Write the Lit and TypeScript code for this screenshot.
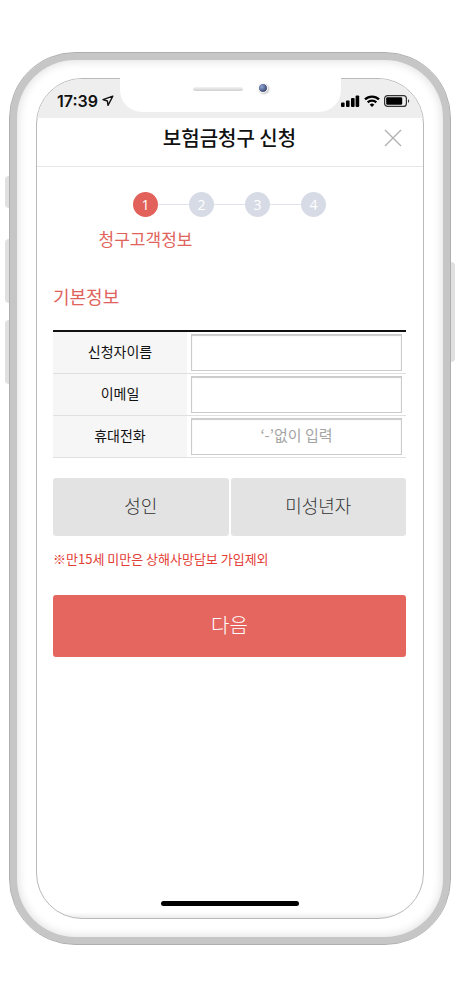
import { LitElement, html, css } from "lit";
import { customElement, property } from "lit/decorators.js";

@customElement("status-bar")
class StatusBar extends LitElement {
  static styles = css`
    :host {
      display: flex;
      justify-content: space-between;
      align-items: center;
      height: 39px;
      padding: 4px 13px 0 20px;
      box-sizing: border-box;
      background: #eeeeee;
      color: #111;
      font: 600 16px/20px Inter, "Liberation Sans", sans-serif;
    }
    .group {
      display: flex;
      align-items: center;
      gap: 4px;
    }
    svg {
      display: block;
    }
  `;
  render() {
    return html`
      <div class="group">
        <span>17:39</span>
        <svg width="12" height="12" viewBox="0 0 12 12" fill="none" stroke="#111" stroke-width="1.4" stroke-linejoin="round">
          <path d="M10.8 1.2 1 4.6 5.4 6 6 10.4Z" />
        </svg>
      </div>
      <div class="group">
        <svg width="19" height="12" viewBox="0 0 19 12">
          <rect x="0" y="7.5" width="3.6" height="4.5" rx="1" />
          <rect x="5" y="5.5" width="3.6" height="6.5" rx="1" />
          <rect x="10" y="3" width="3.6" height="9" rx="1" />
          <rect x="14.6" y="0.5" width="3.6" height="11.5" rx="1" />
        </svg>
        <svg width="16" height="12" viewBox="0 0 16 12" fill="none" stroke="#000" stroke-width="2.3">
          <path d="M1 4.4a10 10 0 0 1 14 0M3.7 7.4a6.2 6.2 0 0 1 8.600 0" />
          <path d="M8 12 5.7 9.7a3.3 3.3 0 0 1 4.6 0Z" fill="#000" stroke="none" />
        </svg>
        <svg width="26" height="12" viewBox="0 0 26 12">
          <rect x="0.6" y="0.6" width="21.8" height="10.8" rx="3" fill="none" stroke="#333" stroke-width="1.2" />
          <rect x="2.2" y="2.2" width="16" height="7.6" rx="1.2" />
          <path d="M24 4.2v3.6c1.5-.5 1.5-3.1 0-3.6Z" fill="#333" />
        </svg>
      </div>
    `;
  }
}

@customElement("step-list")
class StepList extends LitElement {
  @property({ type: Number }) current = 1;
  @property() label = "";

  static styles = css`
    ol {
      display: flex;
      justify-content: center;
      align-items: flex-start;
      height: 60px;
      margin: 0;
      padding: 0;
      list-style: none;
    }
    .step {
      display: flex;
      flex-direction: column;
      align-items: center;
      gap: 10px;
      width: 25px;
    }
    .dot {
      width: 25px;
      height: 25px;
      border-radius: 50%;
      background: #d6dbe5;
      color: #fff;
      text-align: center;
      font-family: "Open Sans", sans-serif;
      font-size: 14px;
      line-height: 26px;
    }
    .current .dot {
      background: #e2625b;
    }
    .label {
      color: #e0635b;
      font-size: 17px;
      line-height: 24px;
      white-space: nowrap;
    }
    .line {
      width: 31px;
      height: 1px;
      margin-top: 12px;
      background: #e1e5eb;
    }
  `;
  render() {
    return html`<ol>
      ${[1, 2, 3, 4].map(
        (n) => html`
          ${n > 1 ? html`<li class="line" aria-hidden="true"></li>` : ""}
          <li class="step ${n === this.current ? "current" : ""}">
            <span class="dot">${n}</span>
            ${n === this.current ? html`<span class="label">${this.label}</span>` : ""}
          </li>
        `
      )}
    </ol>`;
  }
}

@customElement("claim-form")
class ClaimForm extends LitElement {
  static styles = css`
    :host {
      display: block;
    }
    h2 {
      margin: 0;
      color: #e0635b;
      font-size: 18px;
      font-weight: 400;
      line-height: 24px;
    }
    table {
      width: 100%;
      margin-top: 22px;
      border-collapse: separate;
      border-spacing: 0;
      border-top: 2px solid #111;
      table-layout: fixed;
    }
    th {
      width: 134px;
      padding: 0 0 4px;
      box-sizing: border-box;
      background: #f6f6f6;
      border-bottom: 1px solid #e0e0e0;
      color: #111;
      font-size: 14px;
      font-weight: 400;
      line-height: 20px;
    }
    td {
      height: 37px;
      padding: 2px 4px;
      border-bottom: 1px solid #e0e0e0;
    }
    input {
      display: block;
      width: 100%;
      height: 37px;
      padding: 0 8px 4px;
      box-sizing: border-box;
      border: 1px solid #cbcbcb;
      border-radius: 0;
      box-shadow: inset 0 1px 1px #cbcbcb;
      outline: none;
      background: #fff;
      color: #222;
      font: inherit;
      font-size: 15px;
      text-align: center;
    }
    input::placeholder {
      color: #a4a4a4;
      opacity: 1;
    }
    button {
      border: 0;
      padding: 0 0 4px;
      border-radius: 3px;
      font-family: inherit;
      font-weight: 300;
    }
    .ages {
      display: grid;
      grid-template-columns: 1fr 1fr;
      gap: 2px;
      margin-top: 20px;
    }
    .age {
      height: 58px;
      background: #e3e3e3;
      color: #333;
      font-size: 18px;
    }
    .note {
      margin: 13px 0 0;
      color: #e33d35;
      font-size: 13px;
      line-height: 20px;
    }
    .next {
      display: block;
      width: 100%;
      height: 62px;
      margin-top: 26px;
      background: #e5665f;
      color: #fff;
      font-size: 20px;
    }
  `;
  render() {
    return html`
      <form>
        <h2>기본정보</h2>
        <table>
          <tr>
            <th scope="row"><label for="name">신청자이름</label></th>
            <td><input id="name" type="text" /></td>
          </tr>
          <tr>
            <th scope="row"><label for="email">이메일</label></th>
            <td><input id="email" type="email" /></td>
          </tr>
          <tr>
            <th scope="row"><label for="phone">휴대전화</label></th>
            <td><input id="phone" type="tel" placeholder="‘-’없이 입력" /></td>
          </tr>
        </table>
        <div class="ages">
          <button class="age" type="button">성인</button>
          <button class="age" type="button">미성년자</button>
        </div>
        <p class="note">※만15세 미만은 상해사망담보 가입제외</p>
        <button class="next" type="button">다음</button>
      </form>
    `;
  }
}

@customElement("app-root")
class AppRoot extends LitElement {
  static styles = css`
    :host {
      display: flex;
      flex-direction: column;
      min-height: 100vh;
      padding: 52px 9px 51px;
      box-sizing: border-box;
      background: #fff;
      font-family: "Noto Sans CJK KR", sans-serif;
    }
    .phone {
      position: relative;
      display: flex;
      flex: 1;
      padding: 25px 26px 25px;
      border: 1px solid #afafaf;
      border-radius: 66px;
      background: #fff;
      box-shadow: inset 0 0 0 7px #c6c6c6, inset 0 0 9px 9px #e4e4e4;
    }
    .key {
      position: absolute;
      left: -5px;
      width: 4px;
      border-radius: 4px 0 0 4px;
      background: #e0e0e0;
    }
    .mute {
      top: 123px;
      height: 32px;
    }
    .up {
      top: 186px;
      height: 64px;
    }
    .down {
      top: 267px;
      height: 64px;
    }
    .power {
      top: 209px;
      left: auto;
      right: -5px;
      height: 100px;
      border-radius: 0 4px 4px 0;
    }
    .screen {
      display: flex;
      flex: 1;
      flex-direction: column;
      min-width: 0;
      overflow: hidden;
      border: 1px solid #b9b9b9;
      border-radius: 46px;
      background: linear-gradient(to top, #ececec, #fff 6px);
    }
    .notch {
      position: absolute;
      top: 24px;
      left: 50%;
      display: flex;
      align-items: flex-start;
      justify-content: flex-end;
      gap: 15px;
      width: 221px;
      height: 35px;
      margin-left: -110px;
      padding: 5px 73px 0 0;
      box-sizing: border-box;
      border-radius: 0 0 22px 22px;
      background: #fff;
    }
    .speaker {
      width: 50px;
      height: 4px;
      margin-top: 5px;
      border-radius: 2px;
      background: linear-gradient(#f4f4f4, #cfcfcf);
    }
    .camera {
      width: 8px;
      height: 8px;
      margin-top: 1px;
      border: 1px solid #f2f2f2;
      border-radius: 50%;
      background: radial-gradient(circle at 35% 35%, #8fa6d8, #4a5680 60%, #333c5c);
      box-shadow: 1px 1px 2px #bbb;
    }
    header {
      display: grid;
      grid-template-columns: 40px 1fr 40px;
      align-items: center;
      height: 49px;
      padding: 0 10px 8px 9px;
      box-sizing: border-box;
      border-bottom: 1px solid #e6e6e6;
    }
    h1 {
      grid-column: 2;
      margin: 0;
      color: #111;
      text-align: center;
      font-size: 20px;
      font-weight: 500;
      line-height: 28px;
    }
    .close {
      display: grid;
      place-items: center;
      height: 32px;
      padding: 0;
      border: 0;
      background: none;
    }
    main {
      display: flex;
      flex: 1;
      flex-direction: column;
      gap: 32px;
      padding: 25px 17px 24px 16px;
    }
    .home {
      align-self: center;
      width: 138px;
      height: 5px;
      margin-bottom: 12px;
      border-radius: 3px;
      background: #000;
    }
  `;
  render() {
    return html`
      <div class="phone">
        <span class="key mute"></span>
        <span class="key up"></span>
        <span class="key down"></span>
        <span class="key power"></span>
        <div class="screen">
          <status-bar></status-bar>
          <header>
            <h1>보험금청구 신청</h1>
            <button class="close" type="button" aria-label="닫기">
              <svg width="18" height="18" viewBox="0 0 18 18" stroke="#b0b0b0" stroke-width="1.3">
                <path d="M1 1 17 17M17 1 1 17" />
              </svg>
            </button>
          </header>
          <main>
            <step-list current="1" label="청구고객정보"></step-list>
            <claim-form></claim-form>
          </main>
          <div class="home"></div>
        </div>
        <div class="notch">
          <span class="speaker"></span>
          <span class="camera"></span>
        </div>
      </div>
    `;
  }
}
